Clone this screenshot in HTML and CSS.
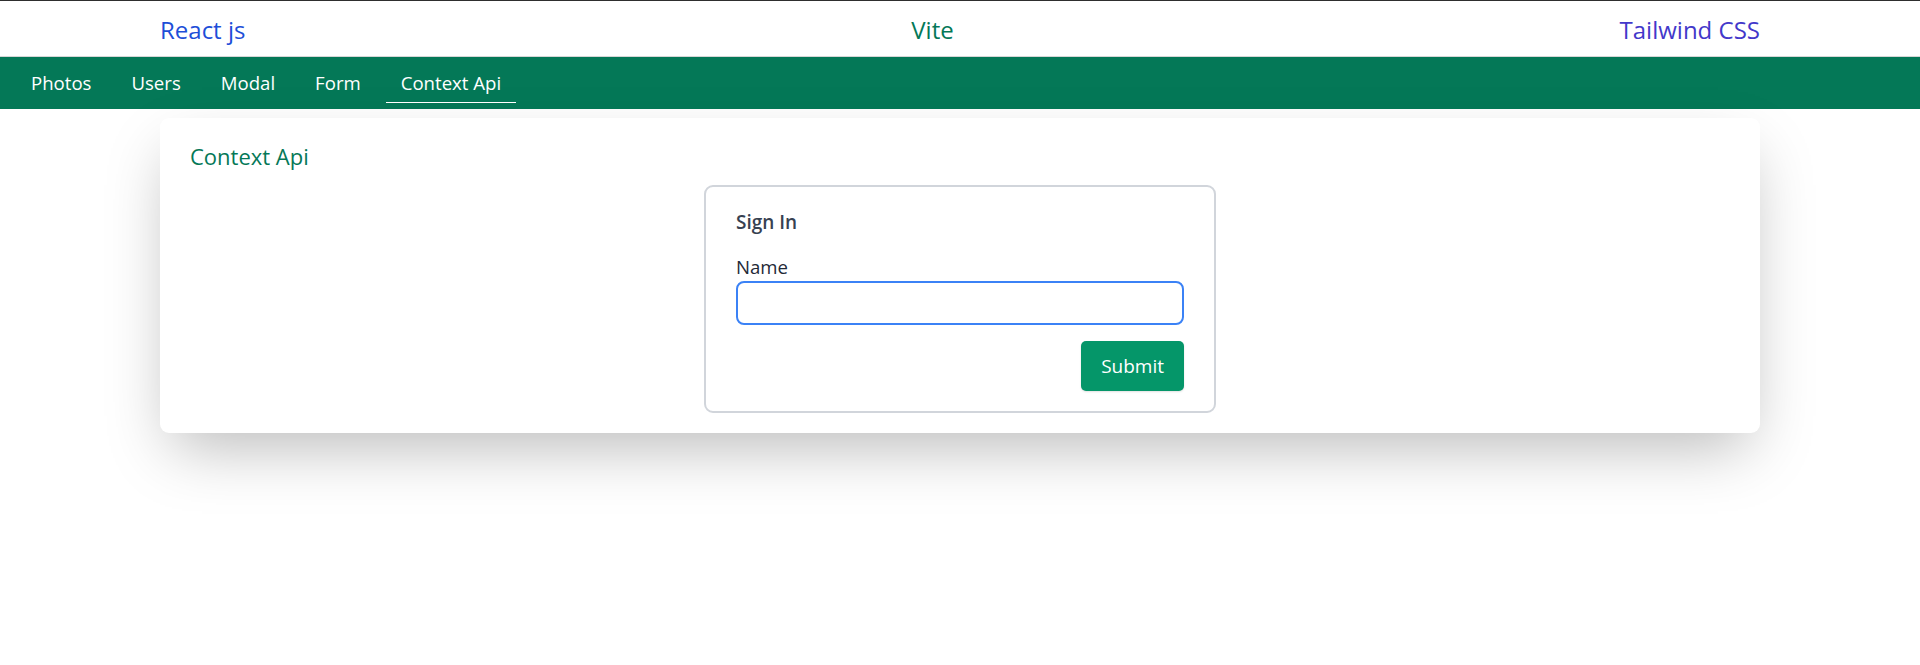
FILE: index.html
```html
<!DOCTYPE html>
<html lang="en">
<head>
<meta charset="utf-8">
<title>Context Api</title>
<link rel="stylesheet" href="styles.css">
</head>
<body>
  <header class="site-header">
    <div class="header-inner">
      <span class="brand brand-react">React js</span>
      <span class="brand brand-vite">Vite</span>
      <span class="brand brand-tailwind">Tailwind CSS</span>
    </div>
  </header>
  <nav class="main-nav">
    <a class="nav-link" href="#">Photos</a>
    <a class="nav-link" href="#">Users</a>
    <a class="nav-link" href="#">Modal</a>
    <a class="nav-link" href="#">Form</a>
    <a class="nav-link active" href="#">Context Api</a>
  </nav>
  <main class="page">
    <section class="card">
      <h2 class="card-title">Context Api</h2>
      <form class="signin">
        <h3 class="signin-title">Sign In</h3>
        <label class="field-label" for="name">Name</label>
        <input class="field-input" id="name" type="text">
        <div class="actions">
          <button class="btn-submit" type="button">Submit</button>
        </div>
      </form>
    </section>
  </main>
</body>
</html>
```
FILE: styles.css
```css
* { box-sizing: border-box; }

html, body {
  margin: 0;
  padding: 0;
  background: #ffffff;
  font-family: "Open Sans", "Noto Sans", sans-serif;
}

body {
  min-height: 100vh;
}

.site-header {
  border-top: 1px solid #2e2e2e;
  border-bottom: 1px solid #d6d6d6;
  padding: 13px 0 10px;
}

.header-inner {
  width: 83.3333%;
  margin: 0 auto;
  display: flex;
  justify-content: space-between;
  align-items: center;
}

.brand {
  font-size: 24px;
  line-height: 32px;
  font-weight: 500;
}
.brand-react { color: #1d4ed8; }
.brand-vite { color: #047857; }
.brand-tailwind { color: #4338ca; }

.main-nav {
  background: #047857;
  display: flex;
  gap: 10px;
  padding: 6px 16px;
  height: 52px;
}

.nav-link {
  color: #ffffff;
  text-decoration: none;
  font-size: 18.6px;
  line-height: 28px;
  padding: 6px 15px 5px;
  border-bottom: 1px solid transparent;
}
.nav-link.active { border-bottom-color: #ffffff; }

.page {
  padding: 9px 0 160px;
}

.card {
  width: 83.3333%;
  margin: 0 auto;
  background: #ffffff;
  border-radius: 9px;
  box-shadow: 0 25px 60px -12px rgba(0, 0, 0, 0.28);
  padding: 24px 30px 20px;
}

.card-title {
  margin: 0 0 15px;
  font-size: 22px;
  line-height: 28px;
  font-weight: 500;
  color: #047857;
}

.signin {
  width: 512px;
  margin: 0 auto;
  border: 2px solid #d1d5db;
  border-radius: 9px;
  padding: 21px 30px 20px;
  display: flex;
  flex-direction: column;
}

.signin-title {
  margin: 0 0 17px;
  font-size: 19px;
  line-height: 28px;
  font-weight: 600;
  color: #374151;
}

.field-label {
  font-size: 18.6px;
  line-height: 28px;
  color: #1f2937;
}

.field-input {
  height: 44px;
  width: 100%;
  border: 2px solid #3b82f6;
  border-radius: 8px;
  outline: none;
  padding: 0 12px;
  font-family: inherit;
  font-size: 18px;
}

.actions {
  display: flex;
  justify-content: flex-end;
  margin-top: 16px;
}

.btn-submit {
  background: #059669;
  color: #ffffff;
  border: none;
  border-radius: 5px;
  padding: 11px 20px;
  font-family: inherit;
  font-size: 19px;
  line-height: 28px;
  box-shadow: 0 1px 2px rgba(0, 0, 0, 0.12);
  cursor: pointer;
}
```
